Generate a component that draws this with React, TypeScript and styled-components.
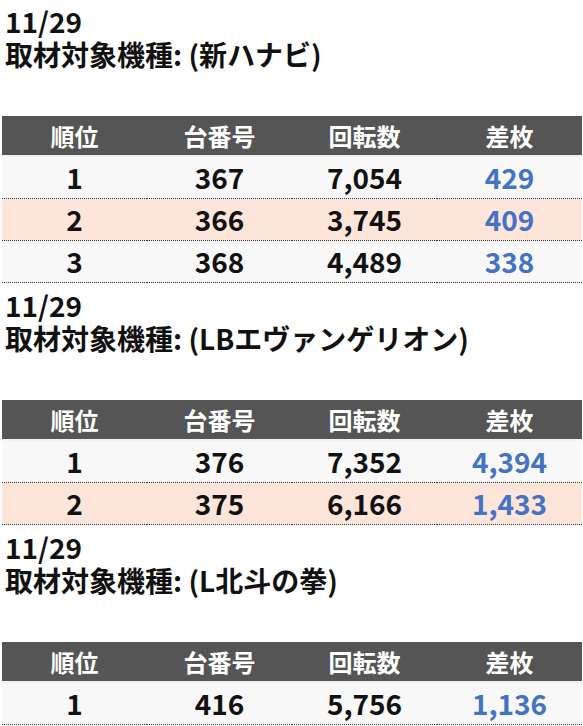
import React from "react";
import styled, { createGlobalStyle } from "styled-components";

const GlobalStyle = createGlobalStyle`
  html, body {
    margin: 0;
    padding: 0;
    background: #ffffff;
  }
  body {
    font-family: "Noto Sans CJK JP", "Noto Sans", sans-serif;
    color: #111111;
  }
`;

type Row = { rank: number; machine: string; spins: string; diff: string };
type Section = { date: string; model: string; rows: Row[] };

const sections: Section[] = [
  {
    date: "11/29",
    model: "新ハナビ",
    rows: [
      { rank: 1, machine: "367", spins: "7,054", diff: "429" },
      { rank: 2, machine: "366", spins: "3,745", diff: "409" },
      { rank: 3, machine: "368", spins: "4,489", diff: "338" },
    ],
  },
  {
    date: "11/29",
    model: "LBエヴァンゲリオン",
    rows: [
      { rank: 1, machine: "376", spins: "7,352", diff: "4,394" },
      { rank: 2, machine: "375", spins: "6,166", diff: "1,433" },
    ],
  },
  {
    date: "11/29",
    model: "L北斗の拳",
    rows: [{ rank: 1, machine: "416", spins: "5,756", diff: "1,136" }],
  },
];

const Page = styled.div`
  display: flex;
  flex-direction: column;
  padding: 0 1px 0 2px;
`;

const Block = styled.section<{ $first: boolean }>`
  display: flex;
  flex-direction: column;
  padding-top: ${(p) => (p.$first ? "5px" : "6px")};
`;

const Heading = styled.div`
  font-family: "Noto Sans CJK JP", "Noto Sans", sans-serif;
  font-weight: 700;
  font-size: 28px;
  line-height: 33px;
  color: #111111;
  padding-left: 3px;
  margin-bottom: 45px;
`;

const Table = styled.table`
  width: 100%;
  border-collapse: collapse;
  table-layout: fixed;
`;

const HeadCell = styled.th`
  background: #555555;
  color: #ffffff;
  font-family: "Noto Sans CJK JP", "Noto Sans", sans-serif;
  font-weight: 700;
  font-size: 24px;
  height: 39px;
  padding: 0;
  text-align: center;
  border-bottom: 2px solid #f2f2f2;
`;

const BodyRow = styled.tr<{ $alt: boolean }>`
  background: ${(p) => (p.$alt ? "#fde5da" : "#f8f8f8")};
  border-bottom: 1px dotted #333333;
`;

const Cell = styled.td<{ $blue?: boolean }>`
  font-family: "Noto Sans CJK JP", "Noto Sans", sans-serif;
  font-weight: 700;
  font-size: 28px;
  height: 41px;
  padding: 0;
  line-height: 41px;
  text-align: center;
  color: ${(p) => (p.$blue ? "#4472c4" : "#111111")};
`;

export default function App() {
  return (
    <>
      <GlobalStyle />
      <Page>
        {sections.map((s, i) => (
          <Block key={i} $first={i === 0}>
            <Heading>
              <div>{s.date}</div>
              <div>取材対象機種: ({s.model})</div>
            </Heading>
            <Table>
              <thead>
                <tr>
                  <HeadCell>順位</HeadCell>
                  <HeadCell>台番号</HeadCell>
                  <HeadCell>回転数</HeadCell>
                  <HeadCell>差枚</HeadCell>
                </tr>
              </thead>
              <tbody>
                {s.rows.map((r, j) => (
                  <BodyRow key={j} $alt={j % 2 === 1}>
                    <Cell>{r.rank}</Cell>
                    <Cell>{r.machine}</Cell>
                    <Cell>{r.spins}</Cell>
                    <Cell $blue>{r.diff}</Cell>
                  </BodyRow>
                ))}
              </tbody>
            </Table>
          </Block>
        ))}
      </Page>
    </>
  );
}
